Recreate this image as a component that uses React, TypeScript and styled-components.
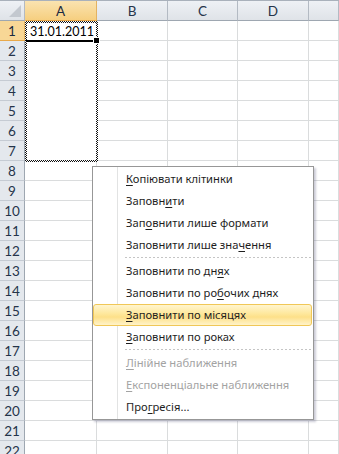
import React from 'react'
import styled, { createGlobalStyle, css } from 'styled-components'

const GlobalStyle = createGlobalStyle`
	html, body {
		margin: 0;
		padding: 0;
		background: #fff;
		overflow: hidden;
	}
	body {
		font-family: "Lato", "Liberation Sans", sans-serif;
	}
`;

const columns = ['A', 'B', 'C', 'D', ''];
const rows = Array.from({ length: 22 }, (_, i) => i + 1);

type MenuEntry =
	| { kind: 'sep' }
	| { kind: 'item'; before: string; key: string; after: string; disabled?: boolean; hover?: boolean };

const menu: MenuEntry[] = [
	{ kind: 'item', before: '', key: 'К', after: 'опіювати клітинки' },
	{ kind: 'item', before: 'Заповн', key: 'и', after: 'ти' },
	{ kind: 'item', before: 'Зап', key: 'о', after: 'внити лише формати' },
	{ kind: 'item', before: 'Заповнити лише зна', key: 'ч', after: 'ення' },
	{ kind: 'sep' },
	{ kind: 'item', before: 'Заповнити по дн', key: 'я', after: 'х' },
	{ kind: 'item', before: 'Заповнити по ро', key: 'б', after: 'очих днях' },
	{ kind: 'item', before: '', key: 'З', after: 'аповнити по місяцях', hover: true },
	{ kind: 'item', before: '', key: 'З', after: 'аповнити по роках' },
	{ kind: 'sep' },
	{ kind: 'item', before: '', key: 'Л', after: 'інійне наближення', disabled: true },
	{ kind: 'item', before: '', key: 'Е', after: 'кспоненціальне наближення', disabled: true },
	{ kind: 'item', before: 'Про', key: 'г', after: 'ресія...' },
];

const App = () => {
	return (
		<>
			<GlobalStyle />
			<Page>
				<Sheet>
					<Corner>
						<svg width="12" height="12" viewBox="0 0 12 12">
							<polygon points="12,0 12,12 0,12" fill="#c3c8cf" />
						</svg>
					</Corner>
					{columns.map((c, i) => (
						<ColHead key={c + i} $active={c === 'A'}>{c}</ColHead>
					))}
					{rows.map((r) => (
						<React.Fragment key={r}>
							<RowHead $active={r === 1}>{r}</RowHead>
							{columns.map((c, i) => (
								<Cell key={c + i} />
							))}
						</React.Fragment>
					))}
				</Sheet>

				<Selection>
					<SelectionInner>
						<ActiveCell>31.01.2011</ActiveCell>
					</SelectionInner>
					<FillHandle />
				</Selection>

				<Menu>
					{menu.map((m, i) =>
						m.kind === 'sep' ? (
							<Separator key={i} />
						) : (
							<MenuItem key={i} $disabled={m.disabled} $hover={m.hover}>
								{m.before}
								<u>{m.key}</u>
								{m.after}
							</MenuItem>
						)
					)}
				</Menu>
			</Page>
		</>
	);
}

const Page = styled.div`
	position: relative;
	width: 339px;
	height: 454px;
	overflow: hidden;
	border-top: 1px solid #a9b1bb;
	box-sizing: border-box;
`;

const Sheet = styled.div`
	display: grid;
	grid-template-columns: 25px 72px 71px 70px 71px 1fr;
	grid-auto-rows: 20px;
`;

const headBase = css`
	box-sizing: border-box;
	display: flex;
	align-items: center;
	justify-content: center;
	font-size: 13.5px;
	color: #25344a;
	background: linear-gradient(#eef1f5, #dfe3e8);
`;

const Corner = styled.div`
	${headBase};
	border-right: 1px solid #b3bac3;
	border-bottom: 1px solid #9ea7b1;
	justify-content: flex-end;
	align-items: flex-end;
	padding: 0 3px 3px 0;
`;

const activeHead = css`
	background: linear-gradient(#fae3b0, #f6cf80);
	color: #1b2a40;
`;

const ColHead = styled.div<{ $active?: boolean }>`
	${headBase};
	border-right: 1px solid ${(p) => (p.$active ? '#e3b261' : '#b3bac3')};
	border-bottom: 1px solid ${(p) => (p.$active ? '#e9a94a' : '#9ea7b1')};
	${(p) => p.$active && activeHead};
`;

const RowHead = styled.div<{ $active?: boolean }>`
	${headBase};
	background: ${(p) => (p.$active ? '#f8d796' : '#e4e8ed')};
	border-right: 1px solid ${(p) => (p.$active ? '#e3b261' : '#9ea7b1')};
	border-bottom: 1px solid ${(p) => (p.$active ? '#e9a94a' : '#c5cbd3')};
	${(p) => p.$active && `color: #1b2a40;`}
`;

const Cell = styled.div`
	box-sizing: border-box;
	border-right: 1px solid #dadcdd;
	border-bottom: 1px solid #dadcdd;
	background: #fff;
`;

const Selection = styled.div`
	position: absolute;
	left: 25px;
	top: 20px;
	width: 73px;
	height: 141px;
	padding: 2px;
	box-sizing: border-box;
	background:
		repeating-conic-gradient(#111 0 25%, #fff 0 50%) 0 0 / 2px 2px;
`;

const SelectionInner = styled.div`
	width: 100%;
	height: 100%;
	background: #fff;
`;

const ActiveCell = styled.div`
	height: 17px;
	border-bottom: 2px solid #000;
	margin: 0 2px 0 -1px;
	padding-left: 4px;
	box-sizing: content-box;
	font-size: 12.5px;
	line-height: 18px;
	color: #000;
`;

const FillHandle = styled.div`
	position: absolute;
	right: -2px;
	top: 16px;
	width: 5px;
	height: 5px;
	background: #000;
	border: 1px solid #fff;
`;

const Menu = styled.div`
	position: absolute;
	left: 92px;
	top: 165px;
	width: 222px;
	padding: 1px 0 1px 0;
	box-sizing: border-box;
	border: 1px solid #979797;
	background: linear-gradient(to right, #fff 24px, #e2e3e3 24px, #e2e3e3 25px, #fff 25px);
	box-shadow: 2px 2px 2px rgba(110, 110, 140, 0.35);
	font-family: "Noto Sans", "Open Sans", sans-serif;
	font-size: 11.2px;
`;

const MenuItem = styled.div<{ $disabled?: boolean; $hover?: boolean }>`
	height: 22px;
	line-height: 22px;
	padding-left: 33px;
	margin-right: 1px;
	box-sizing: border-box;
	white-space: nowrap;
	color: ${(p) => (p.$disabled ? '#a3a3a3' : '#1e1e1e')};

	u {
		text-decoration-thickness: 1px;
		text-underline-offset: 2px;
	}

	${(p) =>
		p.$hover &&
		css`
			border: 1px solid #f0c757;
			border-radius: 3px;
			line-height: 20px;
			padding-left: 32px;
			background: linear-gradient(#fff5cf, #fee79a 45%, #fde089 60%, #fff3c9);
		`}
`;

const Separator = styled.div`
	height: 4px;
	margin: 0 2px 0 32px;
	background: repeating-linear-gradient(to right, #c5c5c5 0 2px, transparent 2px 4px) 0 1px / 100% 1px no-repeat;
`;

export default App
